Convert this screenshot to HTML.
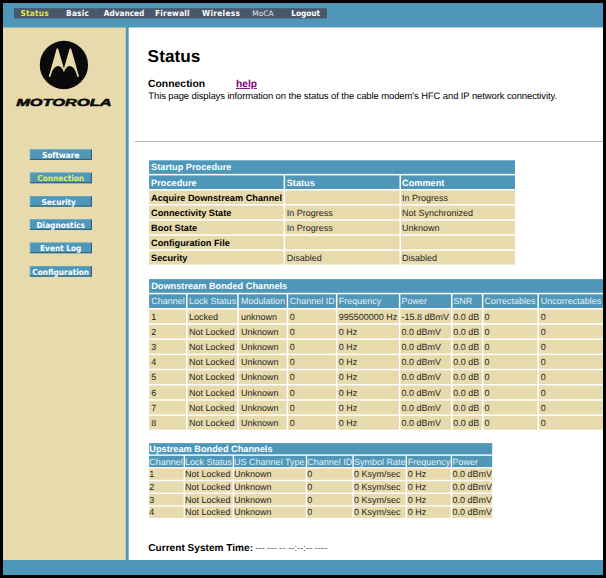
<!DOCTYPE html>
<html lang="en"><head><meta charset="utf-8"><title>Status - Connection</title>
<style>
html,body{margin:0;padding:0;background:#000;overflow:hidden;width:606px;height:578px}
#page{position:absolute;left:0;top:0;width:6060px;height:5780px;transform:scale(0.1);transform-origin:0 0;background:#000;overflow:hidden;font-family:"Liberation Sans",sans-serif;color:#000;text-rendering:geometricPrecision}
#frame{position:absolute;left:30px;top:30px;width:6000px;height:5720px;background:#4e97b9;overflow:hidden}
#topnav{position:absolute;left:110px;top:52px;width:3130px;height:103px;background:#47586a;margin:0;padding:0;list-style:none;font-family:"DejaVu Sans Condensed","DejaVu Sans",sans-serif;font-weight:bold;text-rendering:geometricPrecision;font-size:82px;line-height:103px;color:#fff}
#topnav li{position:absolute;top:-2px;margin:0;padding:0;white-space:nowrap}
#topnav li.on{color:#e6e64a}
#side{position:absolute;left:0;top:245px;width:1228px;height:5325px;background:#e7daac}
#main{position:absolute;left:1257px;top:245px;width:4800px;height:5325px;background:#fff;overflow:hidden}
.btn{position:absolute;left:269px;width:604px;height:90px;background:#4e97b9;border-top:6px solid #6fb0cf;border-left:6px solid #6fb0cf;border-right:10px solid #2f5a73;border-bottom:10px solid #2f5a73;box-sizing:content-box;font-family:"DejaVu Sans Condensed","DejaVu Sans",sans-serif;font-weight:bold;text-rendering:geometricPrecision;font-size:82px;line-height:103px;color:#fff;text-align:center;white-space:nowrap;text-decoration:none;display:block}
.btn.on{color:#e6f04a}
.t{position:absolute;white-space:nowrap;line-height:1;margin:0;padding:0}
h1.t{font-size:167px;font-weight:bold}
h2.t{font-size:102px;font-weight:bold}
a.help{color:#800080;text-decoration:underline;font-weight:bold;font-size:102px}
hr{position:absolute;margin:0;border:0;background:#adadad}
table{position:absolute;border-collapse:separate;table-layout:fixed;background:#fff;color:#1e1e1e;font-size:90px;line-height:1;margin:0;padding:0}
td,th{padding:3px 0 0 0;margin:0;box-sizing:border-box;overflow:visible;white-space:nowrap;text-align:left;font-weight:normal;background:#e7daac;vertical-align:middle}
th{background:#4e97b9;color:#e9f1f5}
th.cap, td.b{font-weight:bold;font-size:92px}
th.cap{color:#fff}
td.b{color:#000}
</style></head><body>
<div id="page"><div id="frame">
<ul id="topnav">
<li class="on" style="left:66px;letter-spacing:2px">Status</li>
<li style="left:521px;letter-spacing:2px">Basic</li>
<li style="left:897px">Advanced</li>
<li style="left:1411px;letter-spacing:2px">Firewall</li>
<li style="left:1881px;letter-spacing:3px;top:3px">Wireless</li>
<li style="left:2383px;font-family:'DejaVu Sans',sans-serif;font-weight:normal;font-size:75px;color:#e2e6ea">MoCA</li>
<li style="left:2772px">Logout</li>
</ul>
<div id="side">
<svg style="position:absolute;left:0;top:0" width="1228" height="1000" viewBox="3 27.5 122.8 100">
<circle cx="63.9" cy="65" r="24.15" fill="#0a0a0a"/>
<path fill="#e7daac" d="M48.7 76.8 L56.7 48.4 L58.1 48.4 L63.9 68.6 L69.7 48.4 L71.1 48.4 L79.1 76.8 L77.3 76.8 C74.3 63 66.3 63.5 63.9 72.4 C61.5 63.5 53.5 63 50.5 76.8 Z"/>
<text x="16.2" y="106.0" font-family="Liberation Sans, sans-serif" font-weight="bold" font-style="italic" font-size="10.3" textLength="95.4" lengthAdjust="spacingAndGlyphs" fill="#0a0a0a" stroke="#0a0a0a" stroke-width="0.55" stroke-linejoin="round">MOTOROLA</text>
</svg>
<a class="btn" style="top:1218px">Software</a>
<a class="btn on" style="top:1451px">Connection</a>
<a class="btn" style="top:1685px;text-indent:-40px">Security</a>
<a class="btn" style="top:1918px">Diagnostics</a>
<a class="btn" style="top:2151px">Event Log</a>
<a class="btn" style="top:2385px">Configuration</a>
</div>
<div id="main">
<h1 class="t " style="left:189px;top:199px;font-size:173px;">Status</h1>
<h2 class="t " style="left:193px;top:510px;font-size:104px;">Connection</h2>
<a class="t help" style="left:1073px;top:512px;font-size:102px;">help</a>
<p class="t " style="left:196px;top:636px;font-size:95px;letter-spacing:-1.18px">This page displays information on the status of the cable modem's HFC and IP network connectivity.</p>
<hr style="left:62px;top:1136px;width:4800px;height:9px">
<table cellspacing="0" style="left:189px;top:1313px;width:3689px;border-spacing:15px"><colgroup><col style="width:1345px"><col style="width:1144px"><col style="width:1140px"></colgroup>
<tr style="height:136px"><th class="cap" colspan="3" style="padding-left:20px">Startup Procedure</th></tr>
<tr style="height:136px"><th class="cap" style="padding-left:20px">Procedure</th><th class="cap" style="padding-left:16px">Status</th><th class="cap" style="padding-left:10px">Comment</th></tr>
<tr style="height:136px"><td class="b" style="padding-left:20px">Acquire Downstream Channel</td><td style="padding-left:16px"></td><td style="padding-left:10px">In Progress</td></tr>
<tr style="height:136px"><td class="b" style="padding-left:20px">Connectivity State</td><td style="padding-left:16px">In Progress</td><td style="padding-left:10px">Not Synchronized</td></tr>
<tr style="height:136px"><td class="b" style="padding-left:20px">Boot State</td><td style="padding-left:16px">In Progress</td><td style="padding-left:10px">Unknown</td></tr>
<tr style="height:136px"><td class="b" style="padding-left:20px">Configuration File</td><td style="padding-left:16px"></td><td style="padding-left:10px"></td></tr>
<tr style="height:136px"><td class="b" style="padding-left:20px">Security</td><td style="padding-left:16px">Disabled</td><td style="padding-left:10px">Disabled</td></tr>
</table>
<table cellspacing="0" style="left:189px;top:2501px;width:4579px;border-spacing:15px"><colgroup><col style="width:369px"><col style="width:497px"><col style="width:480px"><col style="width:477px"><col style="width:615px"><col style="width:506px"><col style="width:294px"><col style="width:540px"><col style="width:651px"></colgroup>
<tr style="height:137px"><th class="cap" colspan="9" style="padding-left:21px">Downstream Bonded Channels</th></tr>
<tr style="height:137px"><th style="padding-left:21px">Channel</th><th style="padding-left:16px">Lock Status</th><th style="padding-left:24px">Modulation</th><th style="padding-left:16px">Channel ID</th><th style="padding-left:14px">Frequency</th><th style="padding-left:10px">Power</th><th style="padding-left:7px">SNR</th><th style="padding-left:10px">Correctables</th><th style="padding-left:18px">Uncorrectables</th></tr>
<tr style="height:137px"><td style="padding-left:21px">1</td><td style="padding-left:16px">Locked</td><td style="padding-left:24px">unknown</td><td style="padding-left:16px">0</td><td style="padding-left:14px">995500000 Hz</td><td style="padding-left:10px">-15.8 dBmV</td><td style="padding-left:7px">0.0 dB</td><td style="padding-left:10px">0</td><td style="padding-left:18px">0</td></tr>
<tr style="height:137px"><td style="padding-left:21px">2</td><td style="padding-left:16px">Not Locked</td><td style="padding-left:24px">Unknown</td><td style="padding-left:16px">0</td><td style="padding-left:14px">0 Hz</td><td style="padding-left:10px">0.0 dBmV</td><td style="padding-left:7px">0.0 dB</td><td style="padding-left:10px">0</td><td style="padding-left:18px">0</td></tr>
<tr style="height:137px"><td style="padding-left:21px">3</td><td style="padding-left:16px">Not Locked</td><td style="padding-left:24px">Unknown</td><td style="padding-left:16px">0</td><td style="padding-left:14px">0 Hz</td><td style="padding-left:10px">0.0 dBmV</td><td style="padding-left:7px">0.0 dB</td><td style="padding-left:10px">0</td><td style="padding-left:18px">0</td></tr>
<tr style="height:137px"><td style="padding-left:21px">4</td><td style="padding-left:16px">Not Locked</td><td style="padding-left:24px">Unknown</td><td style="padding-left:16px">0</td><td style="padding-left:14px">0 Hz</td><td style="padding-left:10px">0.0 dBmV</td><td style="padding-left:7px">0.0 dB</td><td style="padding-left:10px">0</td><td style="padding-left:18px">0</td></tr>
<tr style="height:137px"><td style="padding-left:21px">5</td><td style="padding-left:16px">Not Locked</td><td style="padding-left:24px">Unknown</td><td style="padding-left:16px">0</td><td style="padding-left:14px">0 Hz</td><td style="padding-left:10px">0.0 dBmV</td><td style="padding-left:7px">0.0 dB</td><td style="padding-left:10px">0</td><td style="padding-left:18px">0</td></tr>
<tr style="height:137px"><td style="padding-left:21px">6</td><td style="padding-left:16px">Not Locked</td><td style="padding-left:24px">Unknown</td><td style="padding-left:16px">0</td><td style="padding-left:14px">0 Hz</td><td style="padding-left:10px">0.0 dBmV</td><td style="padding-left:7px">0.0 dB</td><td style="padding-left:10px">0</td><td style="padding-left:18px">0</td></tr>
<tr style="height:137px"><td style="padding-left:21px">7</td><td style="padding-left:16px">Not Locked</td><td style="padding-left:24px">Unknown</td><td style="padding-left:16px">0</td><td style="padding-left:14px">0 Hz</td><td style="padding-left:10px">0.0 dBmV</td><td style="padding-left:7px">0.0 dB</td><td style="padding-left:10px">0</td><td style="padding-left:18px">0</td></tr>
<tr style="height:137px"><td style="padding-left:21px">8</td><td style="padding-left:16px">Not Locked</td><td style="padding-left:24px">Unknown</td><td style="padding-left:16px">0</td><td style="padding-left:14px">0 Hz</td><td style="padding-left:10px">0.0 dBmV</td><td style="padding-left:7px">0.0 dB</td><td style="padding-left:10px">0</td><td style="padding-left:18px">0</td></tr>
</table>
<table cellspacing="0" style="left:190px;top:4142px;width:3459px;border-spacing:14px"><colgroup><col style="width:345px"><col style="width:477px"><col style="width:717px"><col style="width:452px"><col style="width:518px"><col style="width:437px"><col style="width:401px"></colgroup>
<tr style="height:113px"><th class="cap" colspan="7" style="padding-left:2px">Upstream Bonded Channels</th></tr>
<tr style="height:113px"><th style="padding-left:2px">Channel</th><th style="padding-left:-1px">Lock Status</th><th style="padding-left:-1px">US Channel Type</th><th style="padding-left:-1px">Channel ID</th><th style="padding-left:3px">Symbol Rate</th><th style="padding-left:8px">Frequency</th><th style="padding-left:3px">Power</th></tr>
<tr style="height:113px"><td style="padding-left:2px">1</td><td style="padding-left:-1px">Not Locked</td><td style="padding-left:-1px">Unknown</td><td style="padding-left:-1px">0</td><td style="padding-left:3px">0 Ksym/sec</td><td style="padding-left:8px">0 Hz</td><td style="padding-left:3px">0.0 dBmV</td></tr>
<tr style="height:113px"><td style="padding-left:2px">2</td><td style="padding-left:-1px">Not Locked</td><td style="padding-left:-1px">Unknown</td><td style="padding-left:-1px">0</td><td style="padding-left:3px">0 Ksym/sec</td><td style="padding-left:8px">0 Hz</td><td style="padding-left:3px">0.0 dBmV</td></tr>
<tr style="height:113px"><td style="padding-left:2px">3</td><td style="padding-left:-1px">Not Locked</td><td style="padding-left:-1px">Unknown</td><td style="padding-left:-1px">0</td><td style="padding-left:3px">0 Ksym/sec</td><td style="padding-left:8px">0 Hz</td><td style="padding-left:3px">0.0 dBmV</td></tr>
<tr style="height:113px"><td style="padding-left:2px">4</td><td style="padding-left:-1px">Not Locked</td><td style="padding-left:-1px">Unknown</td><td style="padding-left:-1px">0</td><td style="padding-left:3px">0 Ksym/sec</td><td style="padding-left:8px">0 Hz</td><td style="padding-left:3px">0.0 dBmV</td></tr>
</table>
<p class="t " style="left:196px;top:5148px;font-size:101px;font-weight:bold">Current System Time:</p>
<p class="t " style="left:1266px;top:5157px;font-size:94px;color:#555">--- --- -- --:--:-- ----</p>
</div>
</div></div></body></html>
